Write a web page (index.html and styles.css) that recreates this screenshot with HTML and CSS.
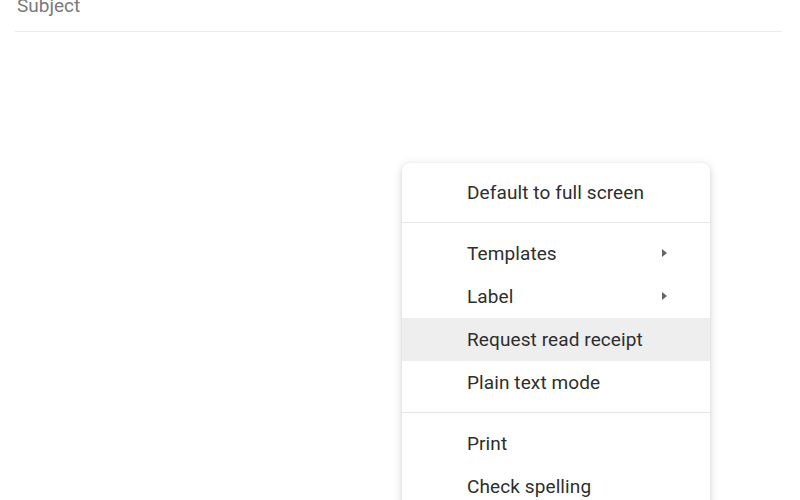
FILE: index.html
```html
<!DOCTYPE html>
<html>
<head>
<meta charset="utf-8">
<link rel="stylesheet" href="styles.css">
</head>
<body>
<div class="compose">
  <div class="subject">Subject</div>
  <div class="body-area"></div>
</div>
<div class="menu">
  <div class="item">Default to full screen</div>
  <div class="sep"></div>
  <div class="item sub">Templates<span class="arrow"></span></div>
  <div class="item sub">Label<span class="arrow"></span></div>
  <div class="item active">Request read receipt</div>
  <div class="item">Plain text mode</div>
  <div class="sep"></div>
  <div class="item">Print</div>
  <div class="item">Check spelling</div>
</div>
</body>
</html>
```
FILE: styles.css
```css
html, body {
  margin: 0;
  padding: 0;
  background: #ffffff;
  width: 800px;
  height: 500px;
  overflow: hidden;
  font-family: Roboto, "Liberation Sans", Arial, sans-serif;
}
.compose {
  padding: 0 18px 0 15px;
}
.subject {
  margin-top: -8px;
  height: 40px;
  line-height: 27px;
  padding-left: 2px;
  font-size: 19px;
  color: #7a7a7a;
  border-bottom: 1px solid #ececec;
  box-sizing: border-box;
}
.menu {
  position: absolute;
  left: 402px;
  top: 163px;
  width: 308px;
  padding-top: 7.5px;
  padding-bottom: 20px;
  background: #ffffff;
  border-radius: 8px;
  box-shadow: 0 2px 10px rgba(0,0,0,0.16), 0 1px 3px rgba(0,0,0,0.08);
}
.item {
  position: relative;
  height: 43px;
  line-height: 43px;
  padding-left: 65px;
  font-size: 19px;
  color: #2e2e2e;
  letter-spacing: 0.1px;
}
.item.active {
  background: #eeeeee;
}
.sep {
  height: 1px;
  background: #e6e6e6;
  margin: 8px 0 9px;
}
.arrow {
  position: absolute;
  left: 260px;
  top: 17px;
  width: 0;
  height: 0;
  border-top: 4.5px solid transparent;
  border-bottom: 4.5px solid transparent;
  border-left: 5px solid #666666;
}
```
